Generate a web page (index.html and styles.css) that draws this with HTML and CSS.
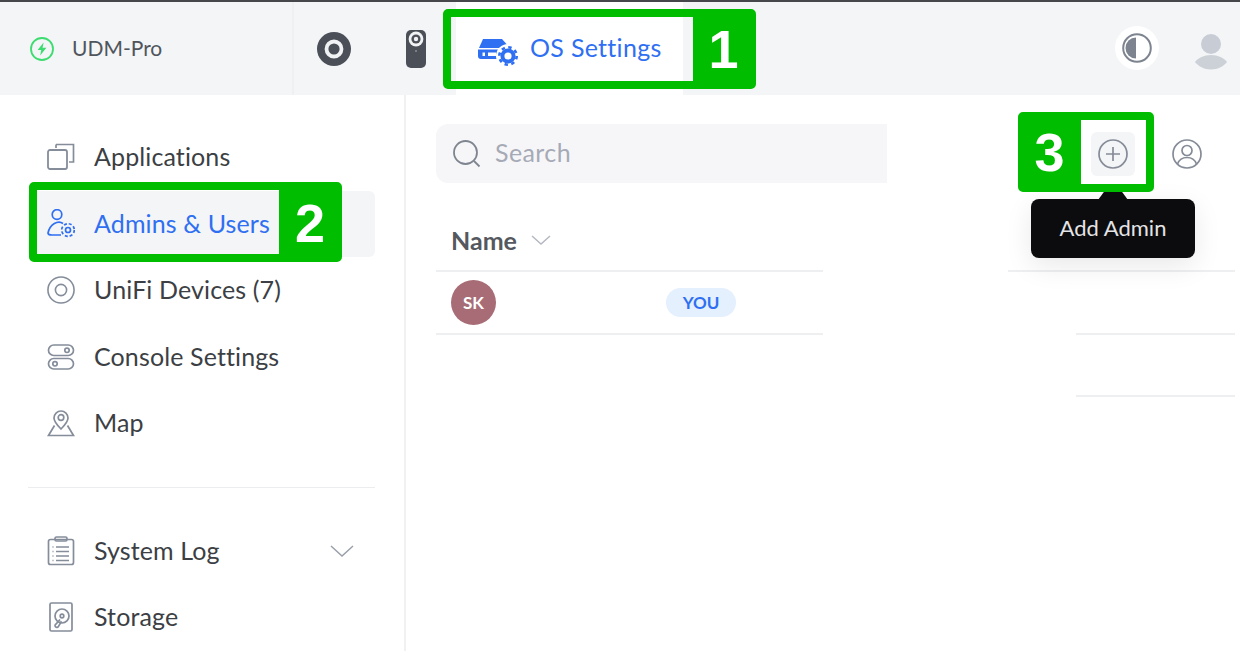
FILE: index.html
```html
<!DOCTYPE html>
<html lang="en">
<head>
<meta charset="utf-8">
<title>Admins &amp; Users</title>
<link rel="stylesheet" href="styles.css">
</head>
<body>
<div class="app">
  <header class="topbar">
    <div class="brand">
      <svg class="brand-icon" viewBox="0 0 26 26"><circle cx="13" cy="13" r="11" fill="none" stroke="#3ddc70" stroke-width="1.8"/><path d="M14.6 6.5 8.6 14h3.6l-1 5.5 6.2-7.8h-3.8z" fill="#3ddc70"/></svg>
      <span>UDM-Pro</span>
    </div>
    <nav class="tabs">
      <a class="tab-icon tab-ring"><svg viewBox="0 0 34 34" width="34" height="34"><circle cx="17" cy="17" r="17" fill="#4b4f58"/><circle cx="17" cy="17" r="7.500" fill="none" stroke="#f1f2f4" stroke-width="3.800"/></svg></a>
      <a class="tab-icon tab-cam"><svg viewBox="0 0 20 38" width="20" height="38"><rect width="20" height="38" rx="5" fill="#4b4f58"/><circle cx="10" cy="9" r="7.400" fill="#f1f2f4"/><circle cx="10" cy="9" r="4.600" fill="#4b4f58"/><circle cx="10" cy="9" r="2.200" fill="#f1f2f4"/><circle cx="10" cy="21" r="1" fill="#8a8e96"/></svg></a>
      <a class="tab-active">
        <svg class="os-icon" viewBox="0 0 40 27" width="40" height="27"><path d="M5 0h19l8 9H1z" fill="#2f6ff2"/><path d="M0 10.500h30V20H3a3 3 0 0 1-3-3z" fill="#2f6ff2"/><rect x="4.500" y="13.500" width="2.500" height="3.500" fill="#fff"/><rect x="10" y="13.500" width="8" height="3.500" fill="#fff"/><circle cx="30" cy="17" r="12" fill="#fff"/><circle cx="30" cy="17" r="5.600" fill="none" stroke="#2f6ff2" stroke-width="4"/><circle cx="30" cy="17" r="8.700" fill="none" stroke="#2f6ff2" stroke-width="2.600" stroke-dasharray="3.400 3.430"/></svg>
        <span>OS Settings</span>
      </a>
    </nav>
    <div class="top-actions">
      <button class="theme-btn" type="button"><svg viewBox="0 0 30 30" width="30" height="30"><circle cx="15" cy="15" r="13.800" fill="none" stroke="#7d8490" stroke-width="2"/><path d="M14 4.500a10.500 10.500 0 0 0 0 21z" fill="#7d8490"/></svg></button>
      <div class="avatar"><svg viewBox="0 0 34 44" width="34" height="44"><circle cx="17" cy="18" r="10" fill="#c8cdd5"/><path d="M17 29c7 0 13 3 16 7-3 4-9 7.500-16 7.500S4 40 1 36c3-4 9-7 16-7z" fill="#ccd1d8"/></svg></div>
    </div>
  </header>

  <div class="body">
    <aside class="sidebar">
      <ul class="nav">
        <li class="nav-item"><svg class="ico" viewBox="0 0 28 28"><rect x="1" y="7" width="19" height="19" rx="2" stroke-width="1.800"/><path d="M9 1.500h17.500V19H22M9 1.500V5"/></svg><span>Applications</span></li>
        <li class="nav-item is-active"><svg class="ico" viewBox="0 0 28 30"><circle cx="10" cy="5.500" r="4.800"/><path d="M16 14.500C11 11 3 15 1 24c0 1.500 2 2 4 2h9"/><circle cx="21" cy="21" r="2.500"/><circle cx="21" cy="21" r="6.300" stroke-dasharray="3 1.950"/></svg><span>Admins &amp; Users</span></li>
        <li class="nav-item"><svg class="ico" viewBox="0 0 30 30"><circle cx="15" cy="15" r="14"/><circle cx="15" cy="15" r="6"/></svg><span>UniFi Devices (7)</span></li>
        <li class="nav-item"><svg class="ico" viewBox="0 0 28 28"><rect x="1.500" y="2" width="25" height="10.500" rx="5.250"/><rect x="1.500" y="15.500" width="25" height="10.500" rx="5.250"/><circle cx="20" cy="7.300" r="2.200"/><circle cx="8" cy="20.800" r="2.200"/></svg><span>Console Settings</span></li>
        <li class="nav-item"><svg class="ico" viewBox="0 0 28 28"><path d="M14 20c-4-4-7-7-7-11a7 7 0 0 1 14 0c0 4-3 7-7 11z"/><circle cx="14" cy="8.500" r="2.800"/><path d="M7.500 16.500 1.500 26.500h25l-6-10"/></svg><span>Map</span></li>
      </ul>
      <hr class="nav-rule">
      <ul class="nav">
        <li class="nav-item"><svg class="ico" viewBox="0 0 28 30"><rect x="1.500" y="3.500" width="25" height="25" rx="2"/><rect x="8" y="1" width="12" height="4" rx="1.500"/><path d="M9 11h13M9 15.500h13M9 20h13M9 24.500h13M5.500 11h1M5.500 15.500h1M5.500 20h1M5.500 24.500h1"/></svg><span>System Log</span><svg class="chevron" viewBox="0 0 24 12"><path d="m1 1 11 10L23 1"/></svg></li>
        <li class="nav-item"><svg class="ico" viewBox="0 0 28 30"><rect x="3" y="1" width="22" height="28" rx="1.500"/><circle cx="15" cy="14" r="7"/><circle cx="15" cy="14" r="1.800"/><path d="M13 17.500 9 22a1.800 1.800 0 1 0 2.500 2.300l3-5"/></svg><span>Storage</span></li>
      </ul>
    </aside>

    <main class="content">
      <div class="toolbar">
        <div class="search">
          <svg viewBox="0 0 28 28" width="28" height="28"><circle cx="12.500" cy="12.500" r="11.500"/><path d="m21 21 5.500 5.500"/></svg>
          <span>Search</span>
        </div>
        <div class="tools">
          <button class="tool is-hover" type="button"><svg viewBox="0 0 30 30" width="30" height="30"><circle cx="15" cy="15" r="14"/><path d="M15 8v14M8 15h14"/></svg></button>
          <button class="tool" type="button"><svg viewBox="0 0 30 30" width="30" height="30"><circle cx="15" cy="15" r="14"/><circle cx="15" cy="11.500" r="5"/><path d="M5.500 25c1.500-4 5-6.500 9.500-6.500s8 2.500 9.500 6.500"/></svg></button>
        </div>
      </div>
      <div class="table">
        <div class="row row-head">
          <div class="cell-main">
            <span class="th">Name</span>
            <svg class="sort" viewBox="0 0 20 10"><path d="m1 1 9 8 9-8"/></svg>
          </div>
          <div class="cell-side wide"></div>
        </div>
        <div class="row row-body">
          <div class="cell-main">
            <span class="initials">SK</span>
            <span class="you">YOU</span>
          </div>
          <div class="cell-side"></div>
        </div>
        <div class="row row-empty">
          <div class="cell-blank"></div>
          <div class="cell-side"></div>
        </div>
      </div>
    </main>
  </div>
</div>

<div class="tooltip">Add Admin</div>

<div class="callout callout-1"><div class="window"></div><div class="badge">1</div></div>
<div class="callout callout-2"><div class="window"></div><div class="badge">2</div></div>
<div class="callout callout-3"><div class="badge">3</div><div class="window"></div></div>
</body>
</html>
```

FILE: styles.css
```css
* { box-sizing: border-box; }
html, body { margin: 0; height: 100%; overflow: hidden; background: #fff; }
body { font-family: Lato, "Noto Sans", sans-serif; color: #3c3f44; }
ul { list-style: none; margin: 0; padding: 0; }
button { border: 0; padding: 0; background: none; }

.app { display: flex; flex-direction: column; height: 651px; }

/* top bar */
.topbar { display: flex; align-items: stretch; height: 95px; flex: none; background: #f4f5f7; border-top: 2px solid #45474b; }
.brand { width: 294px; flex: none; display: flex; align-items: center; gap: 17px; padding-left: 29px; font-size: 21px; color: #50555d; border-right: 2px solid #eff0f2; }
.brand span { padding-bottom: 2px; }
.brand-icon { width: 26px; height: 26px; }
.tabs { display: flex; align-items: stretch; flex: 1; }
.tab-icon { display: flex; align-items: center; }
.tab-ring { margin-left: 23px; }
.tab-cam { margin-left: 55px; }
.tab-active { display: flex; align-items: center; gap: 12px; margin-left: 30px; width: 227px; padding-left: 22px; background: #fff; color: #2f6ff2; font-size: 25px; letter-spacing: .3px; }
.tab-active span { padding-bottom: 4px; }
.os-icon { margin-top: 7px; flex: none; }
.top-actions { display: flex; align-items: center; gap: 33px; padding: 0 10px 1px 0; }
.theme-btn { width: 44px; height: 44px; border-radius: 50%; background: #fff; display: flex; align-items: center; justify-content: center; }
.avatar { width: 38px; height: 44px; display: flex; justify-content: center; }

/* layout */
.body { display: flex; flex: 1; min-height: 0; }

/* sidebar */
.sidebar { width: 406px; flex: none; padding: 29px 29px 0 28px; border-right: 2px solid #f0f1f3; }
.nav-item { display: flex; align-items: center; height: 66.5px; padding: 0 21px 0 19px; font-size: 25px; letter-spacing: .12px; border-radius: 6px; }
.nav-item > span { flex: 1; padding-bottom: 2px; }
.ico { width: 28px; height: 30px; flex: none; margin-right: 19px; fill: none; stroke: #858d9b; stroke-width: 1.700; }
.nav-item.is-active { background: #f4f5f7; color: #2f6ff2; }
.nav-item.is-active .ico { stroke: #2f6ff2; }
.chevron { width: 24px; height: 12px; fill: none; stroke: #9aa0aa; stroke-width: 1.500; }
.nav-rule { border: 0; border-top: 1px solid #ecedef; margin: 30px 0; }

/* content */
.content { flex: 1; padding: 29px 5px 0 30px; min-width: 0; }
.toolbar { display: flex; align-items: flex-start; justify-content: space-between; height: 59px; }
.search { width: 451px; height: 59px; display: flex; align-items: center; gap: 14px; padding-left: 17px; background: #f6f6f8; border-radius: 12px 0 0 12px; font-size: 25px; letter-spacing: .4px; color: #a6aab6; }
.search span { padding-bottom: 4px; }
.search svg { fill: none; stroke: #7f8590; stroke-width: 1.800; }
.tools { display: flex; align-items: center; gap: 30px; padding: 8px 26px 0 0; }
.tool { width: 44px; height: 44px; display: flex; align-items: center; justify-content: center; border-radius: 6px; }
.tool svg { fill: none; stroke: #858b97; stroke-width: 1.700; }
.tool.is-hover { background: #f4f5f7; }

.row { display: flex; justify-content: space-between; align-items: stretch; }
.row-head { height: 89px; }
.row-body { height: 63px; }
.row-empty { height: 62px; }
.cell-main { width: 387px; display: flex; align-items: center; border-bottom: 2px solid #eeeff1; }
.row-head .cell-main { padding: 27px 0 0 15px; }
.row-body .cell-main { padding-left: 15px; }
.cell-blank { width: 387px; }
.cell-side { width: 159px; border-bottom: 2px solid #eeeff1; }
.cell-side.wide { width: 227px; }
.th { font-size: 25px; font-weight: 700; color: #55585e; }
.sort { width: 20px; height: 10px; margin-left: 14px; fill: none; stroke: #b3b7bf; stroke-width: 1.400; }
.initials { width: 45px; height: 45px; border-radius: 50%; background: #a76c75; color: #fff; font-size: 17px; font-weight: 700; display: flex; align-items: center; justify-content: center; flex: none; }
.you { margin-left: 170px; width: 70px; height: 29px; border-radius: 15px; background: #e4f0fe; color: #2f6ff2; font-size: 17px; font-weight: 700; display: flex; align-items: center; justify-content: center; }

/* overlays */
.tooltip { position: absolute; left: 1031px; top: 199px; width: 164px; height: 59px; padding-bottom: 2px; display: flex; align-items: center; justify-content: center; background: #0c0c0e; color: #e4e4e6; font-size: 22px; border-radius: 8px; box-shadow: 0 8px 28px rgba(0, 0, 0, .09); }
.tooltip::before { content: ""; position: absolute; left: 67px; top: -8px; width: 30px; height: 9px; background: #0c0c0e; clip-path: polygon(22% 0, 78% 0, 100% 100%, 0 100%); }

.callout { position: absolute; display: flex; border: 8px solid #00bd00; border-radius: 5px; height: 80px; }
.callout-1 { left: 443px; top: 9px; width: 313px; }
.callout-2 { left: 29px; top: 182px; width: 313px; }
.callout-3 { left: 1018px; top: 112px; width: 136px; }
.window { flex: none; width: 242px; }
.callout-3 .window { width: 65px; }
.badge { flex: 1; background: #00bd00; color: #fff; display: flex; align-items: center; justify-content: center; font-family: "Liberation Sans", Arial, sans-serif; font-weight: 700; font-size: 54px; line-height: 1; }
.callout-1 .badge { padding-left: 6px; }
.callout-2 .badge { padding: 2px 0 0 7px; }
.callout-3 .badge { padding-right: 8px; }
```
